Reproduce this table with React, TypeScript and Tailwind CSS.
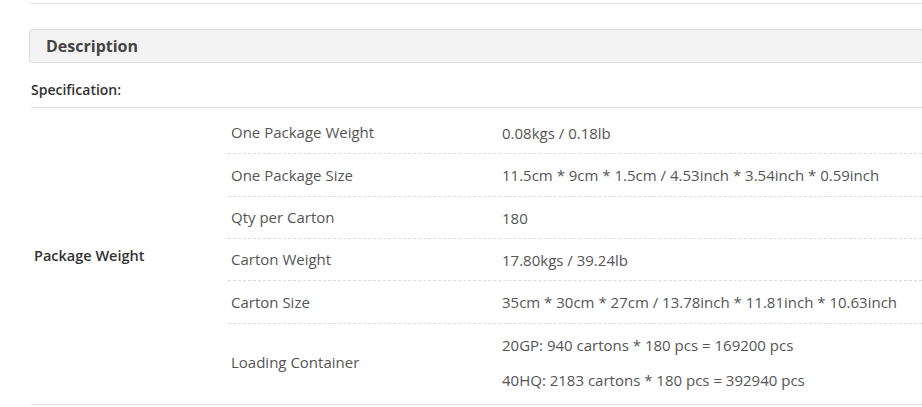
const specRows: { label: string; value: string[]; h: string; pad?: string }[] = [
  { label: "One Package Weight", value: ["0.08kgs / 0.18lb"], h: "h-[46px]", pad: "pt-[4px]" },
  { label: "One Package Size", value: ["11.5cm * 9cm * 1.5cm / 4.53inch * 3.54inch * 0.59inch"], h: "h-[43px]" },
  { label: "Qty per Carton", value: ["180"], h: "h-[42px]" },
  { label: "Carton Weight", value: ["17.80kgs / 39.24lb"], h: "h-[42px]" },
  { label: "Carton Size", value: ["35cm * 30cm * 27cm / 13.78inch * 11.81inch * 10.63inch"], h: "h-[43px]" },
  {
    label: "Loading Container",
    value: ["20GP: 940 cartons * 180 pcs = 169200 pcs", "40HQ: 2183 cartons * 180 pcs = 392940 pcs"],
    h: "h-[80px]",
    pad: "pb-[3px]",
  },
];

const App = () => {
  return (
    <div className="w-[922px] h-[407px] bg-white overflow-hidden pl-[29px] pt-[3px] font-['Open_Sans',sans-serif] text-[#444]">
      {/* previous block edge */}
      <div className="border-t border-[#e2e2e2]" />

      {/* Description tab */}
      <div className="mt-[25px] h-[34px] flex items-center pl-4 bg-[#f3f3f3] border border-r-0 border-[#dddddd] rounded-l-[4px]">
        <h2 className="text-[16px] font-bold text-[#444]">Description</h2>
      </div>

      <div className="pl-[2px]">
        <p className="mt-[17px] h-[27px] text-[14px] font-semibold text-[#333] leading-[20px]">Specification:</p>

        {/* Spec table */}
        <div className="flex border-t border-b border-[#dcdcdc]">
          <div className="w-[197px] shrink-0 flex items-center pl-[3px]">
            <span className="text-[14.5px] font-semibold text-[#333]">Package Weight</span>
          </div>
          <div className="flex-1">
            {specRows.map((row, i) => (
              <div
                key={row.label}
                className={`flex items-center ${row.h} ${row.pad ?? ""} ${
                  i < specRows.length - 1 ? "border-b border-dashed border-[#dcdcdc]" : ""
                }`}
              >
                <div className="w-[274px] shrink-0 pl-[3px] text-[15px] text-[#555]">{row.label}</div>
                <div className="flex flex-col gap-[15px] text-[15px] text-[#555] leading-[20px]">
                  {row.value.map((v) => (
                    <span key={v}>{v}</span>
                  ))}
                </div>
              </div>
            ))}
          </div>
        </div>
      </div>
    </div>
  );
};

export default App;
